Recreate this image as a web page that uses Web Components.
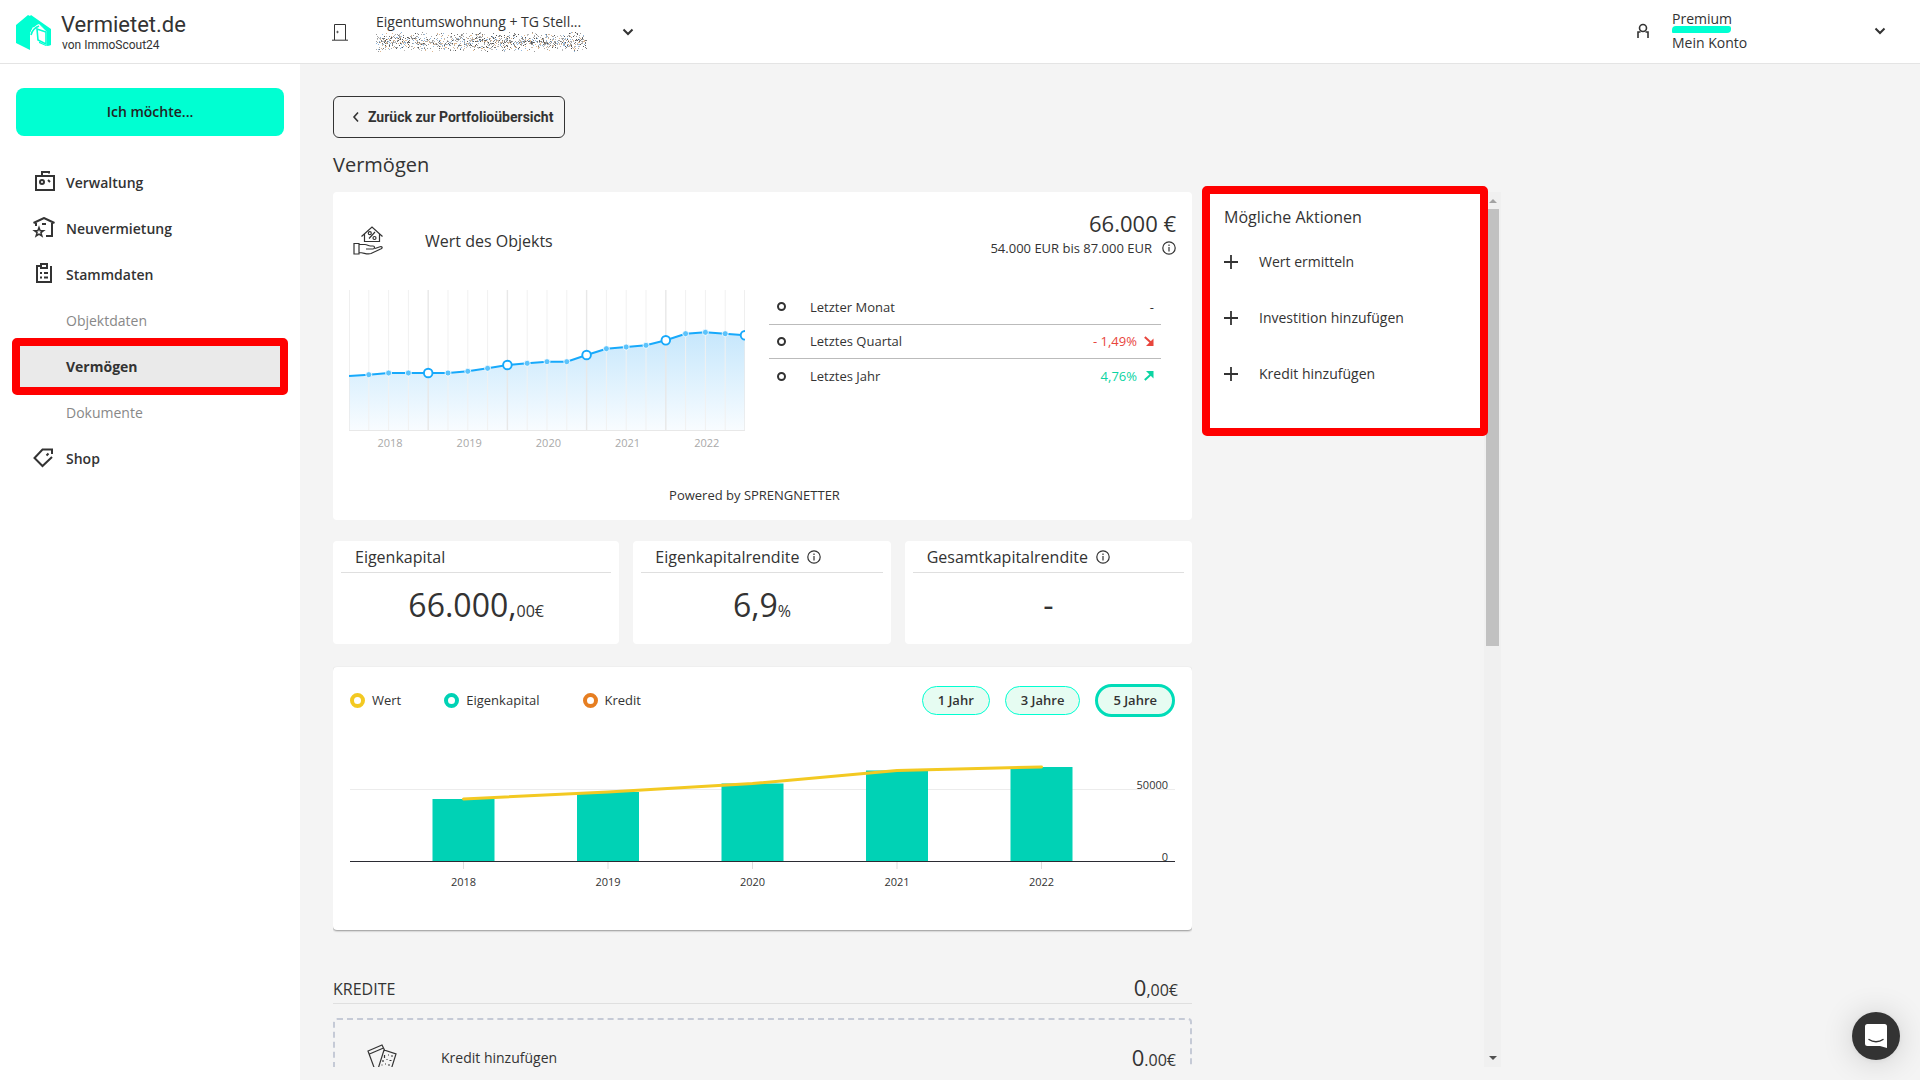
<!DOCTYPE html>
<html lang="de">
<head>
<meta charset="utf-8">
<title>Vermietet.de – Vermögen</title>
<style>
  :root {
    --ink: #333;
    --muted: #888;
    --page: #f4f4f4;
    --mint: #00ffd2;
    --teal: #00d2b5;
    --line: #dfdfdf;
    --mark: #f00;
  }
  html, body { height: 100%; }
  body {
    margin: 0;
    overflow: hidden;
    background: var(--page);
    color: var(--ink);
    font: 14px/20px "Open Sans", "Noto Sans", sans-serif;
  }
</style>
</head>
<body>
<vd-app></vd-app>

<script>
const define = (name, html, setup) => {
  const template = document.createElement('template');
  template.innerHTML = '<style>*,*::before,*::after{box-sizing:border-box}svg{display:block}</style>' + html;
  customElements.define(name, class extends HTMLElement {
    constructor() {
      super();
      this.attachShadow({ mode: 'open' }).append(template.content.cloneNode(true));
    }
    connectedCallback() { if (setup) setup(this.shadowRoot, this); }
  });
};

const ICONS = {
  admin: [24, 24, '<path d="M4 5h18v14H4zM10 5V1h7v1.500"/><circle cx="10" cy="11" r="2"/><path d="M16 9l2 2" />'],
  rent: [24, 24, '<path d="M1.500 6L12 1l10.500 5M20 6v13h-6M10 7h4M4 6v3"/><path d="M7 10.500l1.200 3.200h3.300l-2.600 2 1 3.300L7 17.200 4.100 19l1-3.300-2.600-2h3.300z" stroke-width="1.500"/>'],
  data: [24, 24, '<path d="M9 3H5v16h14V3M9 1h6v4H9zM8 10h2M12 10h4M8 14.500h2M12 14.500h4"/>'],
  shop: [24, 24, '<path d="M20 7V2.500h-9.500L2.500 11l8 8 9.500-9M14.500 8.500l2-2"/>'],
  chevron: [12, 8, '<path d="M1.500 1.500L6 6l4.500-4.500"/>'],
  back: [8, 12, '<path d="M6 1.500L2 6l4 4.500" stroke-width="1.600"/>'],
  person: [14, 16, '<circle cx="7" cy="5" r="3.500" stroke-width="1.600"/><path d="M2 15V9h2.500M9.500 9H12v6" stroke-width="1.600"/>'],
  door: [16, 18, '<path d="M2.500 17V1.500h11V17M0 17.200h16" stroke-width="1"/><circle cx="5.500" cy="9" r=".7" stroke-width="1"/>'],
  plus: [14, 14, '<path d="M7 0v14M0 7h14" stroke-width="1.800"/>'],
  info: [14, 14, '<circle cx="7" cy="7" r="6.200" stroke-width="1.200"/><path d="M7 6v4.500M7 3.500V5" stroke-width="1.200"/>'],
  down: [10, 10, '<path d="M.8 1l6 5.500"/><path d="M9.500 2.500V10H2z" fill="currentColor" stroke="none"/>'],
  up: [10, 10, '<path d="M.8 9l6-5.500"/><path d="M9.500 7.500V0H2z" fill="currentColor" stroke="none"/>'],
  hand: [30, 30, '<g stroke-width="1.200"><path d="M8.500 10.500L19 1l10.500 9.500M11.500 8v7.500h15V8M16 12.500l6-6.500"/><circle cx="16.800" cy="7.200" r="1.500"/><circle cx="21.500" cy="12" r="1.500"/><path d="M1 17.500h5V28H1zM6 18.500h6c2.500 0 3 1.500 5.500 1.500h2.500c2 0 2 3 0 3h-7M22 22.500l5-1.800c2-.6 3 1 1.200 2L18 27.500c-4 1.500-7-1-12-1"/></g>'],
  papers: [30, 30, '<g stroke-width="1.200"><path d="M8 27L1 8l14-6 3 6M2.500 11l14-6M8 27l3 1M11 26l6-19 12 4-6 19-12-4M17.500 12v3M21 12h1M24 13h2M16 17v2M19.500 16.500h1M22.500 17.500h2M14.500 22h1M18 21h1M21 22h2"/></g>'],
};

define('vd-icon', `
  <style>:host{display:inline-block;flex:none}</style><span></span>`,
  (root, el) => {
    const [w, h, body] = ICONS[el.getAttribute('name')];
    root.querySelector('span').innerHTML =
      `<svg width="${w}" height="${h}" viewBox="0 0 ${w} ${h}" fill="none" stroke="currentColor" stroke-width="2" aria-hidden="true">${body}</svg>`;
  });

/* Red frame that highlights whatever it wraps */
define('vd-highlight', `
  <style>
    :host{display:block;position:relative}
    i{position:absolute;inset:-6px -4px -5px;border:8px solid var(--mark);border-radius:5px;pointer-events:none;z-index:2}
  </style><slot></slot><i></i>`);

define('vd-header', `
  <style>
    :host{display:flex;align-items:center;height:64px;background:#fff;border-bottom:1px solid #e4e4e4;flex:none}
    .brand{display:flex;align-items:center;gap:10px;width:300px;padding-left:16px;color:inherit;text-decoration:none;font-family:Roboto,sans-serif}
    .brand b{display:block;font-weight:400;font-size:22px;line-height:24px;padding-top:2px}
    .brand small{display:block;font-size:12px;line-height:16px;padding-left:1px}
    button{display:flex;align-items:center;border:0;background:none;color:inherit;font:inherit;text-align:left;padding:0}
    .object{gap:28px;margin-left:32px}
    .object .names{display:block;width:218px;padding-top:1px}
    .object .names span{display:block}
    .account{margin-left:auto;width:284px;padding:0 34px 2px 0;gap:22px}
    .account .names{flex:1}
    .account span span{display:block}
    .tier::after{content:"";display:block;width:59px;height:7px;margin:-3px 0 0;background:var(--mint);border-radius:4px 2px 4px 1px}
  </style>
  <a class="brand" href="#start">
    <svg width="35" height="36" viewBox="0 0 35 36"><path d="M0 11L12 1l2 1 1-1 20 14v16l-5 1-7-3V17l-6-4-3 6v17L0 29z" fill="#00ffd2"/><path d="M14 36V23c0-7 4-11 9-13l9 7v15l-10-5V14" fill="#fff"/><path d="M23 12c-5 2-7 5-8 9M21 15l9 3v12l-8-4z" fill="none" stroke="#00ffd2" stroke-width="1.600"/><path d="M23 10l12 8v13l-4 1V18z" fill="#00ffd2"/></svg>
    <span><b>Vermietet.de</b><small>von ImmoScout24</small></span>
  </a>
  <button class="object" type="button">
    <vd-icon name="door"></vd-icon>
    <span class="names"><span>Eigentumswohnung + TG Stell...</span><svg class="smudge" width="216" height="20" viewBox="4 0 216 20"></svg></span>
    <vd-icon name="chevron"></vd-icon>
  </button>
  <button class="account" type="button">
    <vd-icon name="person"></vd-icon>
    <span class="names"><span class="tier">Premium</span><span>Mein Konto</span></span>
    <vd-icon name="chevron"></vd-icon>
  </button>`,
  root => {
    /* Anonymised address line: deterministic speckle, denser along the middle */
    let seed = 7;
    const rnd = () => (seed = seed * 16807 % 2147483647) / 2147483647;
    const tones = ['#555', '#777', '#999', '#aaa', '#e0b890', '#90b8e0', '#bbb'];
    let dots = '';
    for (let i = 0; i < 1250; i++) {
      const x = 3 + Math.floor(rnd() * 212);
      const y = Math.floor((rnd() + rnd()) * 10);
      dots += `<rect x="${x}" y="${y}" width="1" height="1" fill="${tones[Math.floor(rnd() * tones.length)]}"/>`;
    }
    root.querySelector('.smudge').innerHTML = dots;
  });

define('vd-nav-item', `
  <style>
    :host{display:block}
    a{display:flex;align-items:center;gap:10px;height:46px;padding-left:16px;color:var(--ink);text-decoration:none;font-weight:600}
    .slot{display:flex;width:24px;flex:none}
    :host([sub]) a{color:var(--muted);font-weight:400}
    :host([active]) a{background:#eaeaea;color:var(--ink);font-weight:700}
  </style>
  <a href="#"><span class="slot"></span><slot></slot></a>`,
  (root, el) => {
    if (el.hasAttribute('icon')) root.querySelector('.slot').innerHTML = `<vd-icon name="${el.getAttribute('icon')}"></vd-icon>`;
    if (el.hasAttribute('active')) root.querySelector('a').setAttribute('aria-current', 'page');
  });

define('vd-sidebar', `
  <style>
    :host{display:block;width:300px;flex:none;background:#fff;padding:24px 16px;box-sizing:border-box}
    button{width:100%;height:48px;border:0;border-radius:8px;background:var(--mint);color:#222;font:inherit;font-weight:600;margin-bottom:24px;display:block}
  </style>
  <button type="button">Ich möchte...</button>
  <nav>
    <vd-nav-item icon="admin">Verwaltung</vd-nav-item>
    <vd-nav-item icon="rent">Neuvermietung</vd-nav-item>
    <vd-nav-item icon="data">Stammdaten</vd-nav-item>
    <vd-nav-item sub>Objektdaten</vd-nav-item>
    <vd-highlight><vd-nav-item sub active>Vermögen</vd-nav-item></vd-highlight>
    <vd-nav-item sub>Dokumente</vd-nav-item>
    <vd-nav-item icon="shop">Shop</vd-nav-item>
  </nav>`);

define('vd-value-chart', `
  <style>:host{display:block}svg{width:100%;height:auto}text{font-size:11px;fill:#a9a9a9;text-anchor:middle}</style>
  <svg viewBox="0 0 396 160" role="img" aria-label="Wertentwicklung 2018 bis 2022"></svg>`,
  root => {
    const ys = [86, 84.7, 83, 83, 83, 83, 81.3, 78.3, 75, 73.3, 71.7, 71.7, 65, 58.7, 57, 55.3, 50.3, 43.7, 42.3, 43.7, 45.3];
    const pts = ys.map((y, i) => [i * 19.8, y]);
    const line = 'M' + pts.map(p => p.join(' ')).join('L');
    let s = '<defs><linearGradient id="fill" x1="0" y1="0" x2="0" y2="1"><stop offset="0" stop-color="#c6e7fc"/><stop offset="1" stop-color="#f8fcff"/></linearGradient><clipPath id="clip"><rect width="396" height="141"/></clipPath></defs>';
    s += `<g clip-path="url(#clip)"><path d="${line}V140H0Z" fill="url(#fill)"/>`;
    pts.forEach(([x], i) => { s += `<path d="M${x} 0V140" stroke="${i % 4 ? '#f1f1f1' : '#e8e8e8'}" stroke-width="${i % 4 ? 1 : 1.4}"/>`; });
    s += `<path d="M0 140.500H396" stroke="#e8e8e8"/><path d="${line}" fill="none" stroke="#17a9fb" stroke-width="2"/>`;
    pts.forEach(([x, y], i) => {
      if (!i) return;
      s += i % 4 ? `<circle cx="${x}" cy="${y}" r="3" fill="#5cc3fb" stroke="#fff" stroke-width=".8"/>`
                 : `<circle cx="${x}" cy="${y}" r="4.300" fill="#fff" stroke="#17a9fb" stroke-width="1.900"/>`;
    });
    s += '</g>';
    [2018, 2019, 2020, 2021, 2022].forEach((t, i) => { s += `<text x="${41 + i * 79.2}" y="157">${t}</text>`; });
    root.querySelector('svg').innerHTML = s;
  });

define('vd-bar-chart', `
  <style>:host{display:block}svg{width:100%;height:auto}text{font-size:11px;fill:var(--ink)}</style>
  <svg viewBox="0 0 827 196" role="img" aria-label="Vermögensentwicklung 2018 bis 2022"></svg>`,
  root => {
    const tops = [82, 75, 66.5, 53.5, 50];
    const cx = i => 114.5 + i * 144.5;
    let s = '<path d="M1 72.500H826" stroke="#ececec"/>';
    tops.forEach((y, i) => {
      s += `<path d="M${cx(i)} 145v7" stroke="#ddd"/><rect x="${cx(i) - 31}" y="${y}" width="62" height="${144 - y}" fill="#00d2b5"/><text x="${cx(i)}" y="169" text-anchor="middle">${2018 + i}</text>`;
    });
    s += '<rect x="1" y="144" width="825" height="1" fill="#2b2b33" shape-rendering="crispEdges"/>';
    s += `<path d="M${tops.map((y, i) => cx(i) + ' ' + y).join('L')}" fill="none" stroke="#f3c922" stroke-width="3" stroke-linecap="round"/>`;
    s += '<text x="819" y="72" text-anchor="end">50000</text><text x="819" y="144" text-anchor="end">0</text>';
    root.querySelector('svg').innerHTML = s;
  });

define('vd-object-value', `
  <style>
    :host{display:block;background:#fff;border-radius:4px;padding:16px 16px 15px}
    header{display:flex;align-items:flex-start;height:66px;margin-bottom:16px}
    .title{display:flex;align-items:center;height:100%;gap:42px;padding-left:4px;margin:0;font-size:16px;font-weight:400}
    .amount{margin-left:auto;text-align:right;font-size:13px;line-height:18px}
    .amount strong{display:block;font-size:22px;line-height:31px;font-weight:400}
    .range{display:flex;align-items:center;justify-content:flex-end;gap:10px}
    .body{display:grid;grid-template-columns:396fr 392fr;column-gap:24px;padding-right:15px}
    table{width:100%;border-collapse:collapse;align-self:start;font-size:13px}
    td{height:34px;padding:0 7px 0 0}
    tr:last-child td{height:36px}
    tr+tr td{border-top:1px solid #bbb}
    td:first-child{width:41px;padding-left:8px}
    td:last-child{text-align:right}
    i{display:block;width:9px;height:9px;border:2px solid var(--ink);border-radius:50%}
    .value{display:inline-flex;align-items:center;gap:7px}
    .minus{color:#e8453c}.plus{color:#0bd4a2}
    footer{margin-top:35px;text-align:center;padding-right:16px;font-size:13px}
  </style>
  <header>
    <h2 class="title"><vd-icon name="hand"></vd-icon>Wert des Objekts</h2>
    <div class="amount"><strong>66.000 €</strong><span class="range">54.000 EUR bis 87.000 EUR <vd-icon name="info"></vd-icon></span></div>
  </header>
  <div class="body">
    <vd-value-chart></vd-value-chart>
    <table>
      <tr><td><i></i></td><td>Letzter Monat</td><td>-</td></tr>
      <tr><td><i></i></td><td>Letztes Quartal</td><td><span class="value minus">- 1,49% <vd-icon name="down"></vd-icon></span></td></tr>
      <tr><td><i></i></td><td>Letztes Jahr</td><td><span class="value plus">4,76% <vd-icon name="up"></vd-icon></span></td></tr>
    </table>
  </div>
  <footer>Powered by SPRENGNETTER</footer>`);

define('vd-kpi', `
  <style>
    :host{display:block;background:#fff;border-radius:4px;padding:4px 8px 0;height:103px;box-sizing:border-box}
    h3{display:flex;align-items:center;gap:8px;height:28px;padding:0 14px 4px;margin:0;border-bottom:1px solid var(--line);font-size:16px;font-weight:400;white-space:nowrap}
    p{margin:12px 0 0;text-align:center;font-size:32px;line-height:40px}
    ::slotted(small){font-size:16px}
  </style>
  <h3><slot name="label"></slot></h3><p><slot></slot></p>`);

define('vd-history', `
  <style>
    :host{display:block;background:#fff;border-radius:4px;padding:16px 16px 17px;box-shadow:0 1px 2px rgba(0,0,0,.4)}
    .bar{display:flex;align-items:center;height:34px;font-size:13px}
    ul{display:flex;gap:43px;margin:0 auto 0 0;padding:0 0 0 1px;list-style:none}
    li{display:flex;align-items:center;gap:7px}
    li::before{content:"";width:15px;height:15px;border:4px solid var(--c);border-radius:50%}
    .range{display:flex;align-items:center;gap:15px;padding-right:1px}
    button{height:29px;padding:0 15px;border:1px solid var(--mint);border-radius:17px;background:#e6fcf2;color:var(--ink);font:inherit;font-weight:600}
    button[aria-pressed=true]{height:33px;border:3px solid #00dcb8}
  </style>
  <div class="bar">
    <ul><li style="--c:#f3c922">Wert</li><li style="--c:#00d2b5">Eigenkapital</li><li style="--c:#e67e22">Kredit</li></ul>
    <div class="range"><button type="button">1 Jahr</button><button type="button">3 Jahre</button><button type="button" aria-pressed="true">5 Jahre</button></div>
  </div>
  <vd-bar-chart></vd-bar-chart>`);

define('vd-credits', `
  <style>
    :host{display:block}
    header{display:flex;align-items:center;justify-content:space-between;height:30px;padding-right:14px;border-bottom:1px solid var(--line);margin-bottom:14px}
    h2{margin:0;font-size:16px;font-weight:400}
    .sum{font-size:22px;line-height:28px}
    small{font-size:16px}
    a{display:flex;align-items:center;height:80px;padding:0 14px 0 32px;border:2px dashed #c5cad6;border-radius:4px;color:inherit;text-decoration:none}
    a .label{margin:0 auto 0 44px}
  </style>
  <header><h2>KREDITE</h2><span class="sum">0<small>,00€</small></span></header>
  <a href="#kredit"><vd-icon name="papers"></vd-icon><span class="label">Kredit hinzufügen</span><span class="sum">0<small>.00€</small></span></a>`);

define('vd-actions', `
  <style>
    :host{display:block;background:#fff;height:239px;padding:13px 18px;box-sizing:border-box}
    h2{margin:0 0 9px;font-size:16px;line-height:24px;font-weight:400}
    button{display:flex;align-items:center;gap:21px;width:100%;height:48px;margin-bottom:8px;padding:0;border:0;background:none;color:inherit;font:inherit;text-align:left}
  </style>
  <h2>Mögliche Aktionen</h2>
  <button type="button"><vd-icon name="plus"></vd-icon>Wert ermitteln</button>
  <button type="button"><vd-icon name="plus"></vd-icon>Investition hinzufügen</button>
  <button type="button"><vd-icon name="plus"></vd-icon>Kredit hinzufügen</button>`);

define('vd-scrollbar', `
  <style>
    :host{display:flex;flex-direction:column;align-items:center;background:#f0f0f0}
    i{width:0;height:0;border:4px solid transparent;flex:none}
    .up{border-bottom-color:#a3a3a3;border-top:0;margin:7px 0 6px}
    .down{border-top-color:#505050;border-bottom:0;margin:6px 0 7px}
    .track{flex:1;width:13px}
    .thumb{height:52%;background:#c1c1c1}
  </style>
  <i class="up"></i><div class="track"><div class="thumb"></div></div><i class="down"></i>`);

define('vd-chat', `
  <style>
    :host{position:fixed;right:20px;bottom:20px;z-index:5}
    button{display:grid;place-items:center;width:48px;height:48px;padding:0;border:0;border-radius:50%;background:#333;box-shadow:0 1px 6px rgba(0,0,0,.06),0 2px 32px rgba(0,0,0,.16)}
  </style>
  <button type="button" aria-label="Chat öffnen"><svg width="22" height="24" viewBox="0 0 22 24"><path d="M2.500 0h17A2.500 2.500 0 0 1 22 2.500V24l-7-2H2.500A2.500 2.500 0 0 1 0 19.500v-17A2.500 2.500 0 0 1 2.500 0z" fill="#fff"/><path d="M4 15.500c4 3 10 3 14 0" fill="none" stroke="#333" stroke-width="1.400" stroke-linecap="round"/></svg></button>`);

define('vd-app', `
  <style>
    :host{display:flex;flex-direction:column;height:100vh}
    .shell{display:flex;flex:1;min-height:0}
    main{flex:1;min-width:0;display:flex;flex-direction:column;padding:32px 33px 13px}
    .back{display:flex;align-items:center;gap:8px;align-self:flex-start;height:42px;padding:0 11px 0 18px;border:1px solid var(--ink);border-radius:6px;color:inherit;text-decoration:none;font:700 14px/20px Roboto,sans-serif}
    h1{margin:13px 0;font-size:20px;line-height:28px;font-weight:400}
    .content{flex:1;min-height:0;display:grid;grid-template-columns:minmax(0,859px) 14px minmax(0,278px) 17px;justify-content:start}
    .content>vd-highlight{align-self:start;grid-column:3}
    .column{display:flex;flex-direction:column;gap:21px;overflow:hidden}
    .column>*{flex:none}
    .kpis{display:grid;grid-template-columns:286fr 257fr 287fr;gap:14px}
    vd-history{margin-top:2px}
    vd-credits{margin-top:23px}
  </style>
  <vd-header></vd-header>
  <div class="shell">
    <vd-sidebar></vd-sidebar>
    <main>
      <a class="back" href="#portfolio"><vd-icon name="back"></vd-icon>Zurück zur Portfolioübersicht</a>
      <h1>Vermögen</h1>
      <div class="content">
        <div class="column">
          <vd-object-value></vd-object-value>
          <div class="kpis">
            <vd-kpi><span slot="label">Eigenkapital</span>66.000,<small>00€</small></vd-kpi>
            <vd-kpi><span slot="label">Eigenkapitalrendite</span><vd-icon slot="label" name="info"></vd-icon>6,9<small>%</small></vd-kpi>
            <vd-kpi><span slot="label">Gesamtkapitalrendite</span><vd-icon slot="label" name="info"></vd-icon>-</vd-kpi>
          </div>
          <vd-history></vd-history>
          <vd-credits></vd-credits>
        </div>
        <vd-highlight><vd-actions></vd-actions></vd-highlight>
        <vd-scrollbar></vd-scrollbar>
      </div>
    </main>
  </div>
  <vd-chat></vd-chat>`);
</script>
</body>
</html>
